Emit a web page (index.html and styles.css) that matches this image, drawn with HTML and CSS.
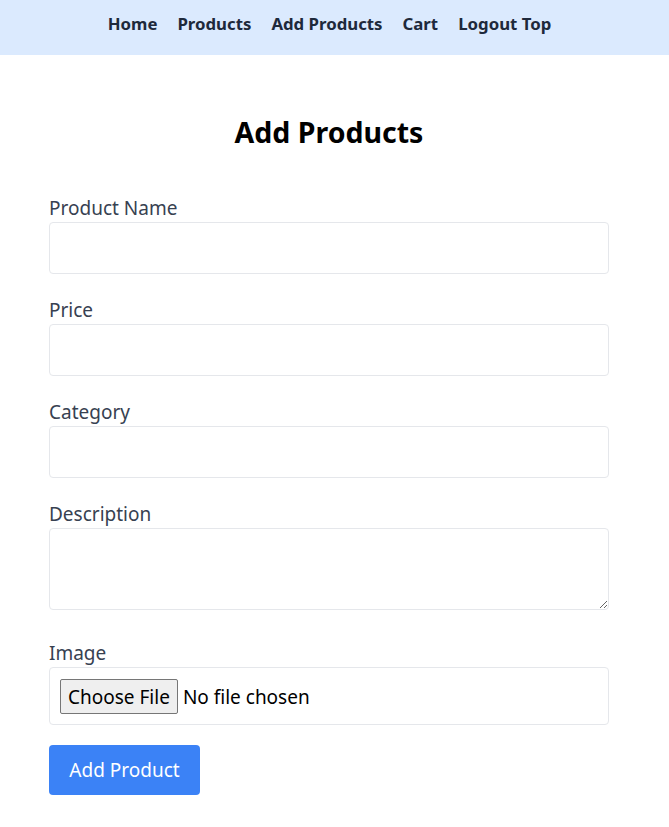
FILE: index.html
```html
<!DOCTYPE html>
<html lang="en">
<head>
<meta charset="utf-8">
<title>Add Products</title>
<link rel="stylesheet" href="styles.css">
</head>
<body>
<nav class="nav">
  <a class="nav-link" href="#">Home</a>
  <a class="nav-link" href="#">Products</a>
  <a class="nav-link" href="#">Add Products</a>
  <a class="nav-link" href="#">Cart</a>
  <a class="nav-link" href="#">Logout Top</a>
</nav>
<main class="main">
  <h2 class="title">Add Products</h2>
  <form class="form">
    <div class="group">
      <label class="label" for="name">Product Name</label>
      <input class="field" id="name" type="text">
    </div>
    <div class="group">
      <label class="label" for="price">Price</label>
      <input class="field" id="price" type="text">
    </div>
    <div class="group">
      <label class="label" for="cat">Category</label>
      <input class="field" id="cat" type="text">
    </div>
    <div class="group group-area">
      <label class="label" for="desc">Description</label>
      <textarea class="field area" id="desc"></textarea>
    </div>
    <div class="group">
      <label class="label" for="img">Image</label>
      <input class="field file" id="img" type="file">
    </div>
    <button class="submit" type="button">Add Product</button>
  </form>
</main>
</body>
</html>
```

FILE: styles.css
```css
* { box-sizing: border-box; }
body {
  margin: 0;
  font-family: "Noto Sans", "Open Sans", sans-serif;
  background: #fff;
}
.nav {
  height: 55px;
  background: #dbeafe;
  display: flex;
  justify-content: center;
  align-items: center;
  gap: 20px;
  padding-right: 10px;
  padding-bottom: 8px;
}
.nav-link {
  font-weight: 700;
  font-size: 16.8px;
  color: #1e293b;
  text-decoration: none;
}
.main {
  width: 560px;
  margin-left: 49px;
  padding-top: 57px;
}
.title {
  margin: 0 0 42px;
  text-align: center;
  font-size: 28.5px;
  font-weight: 700;
  color: #000;
  line-height: 40px;
}
.form {
  display: flex;
  flex-direction: column;
}
.group {
  display: flex;
  flex-direction: column;
  margin-bottom: 22px;
}
.group-area {
  margin-bottom: 29px;
}
.label {
  font-size: 19px;
  color: #374151;
  line-height: 28px;
}
.field {
  width: 560px;
  height: 52px;
  border: 1px solid #e5e7eb;
  border-radius: 4px;
  font-family: inherit;
  font-size: 19px;
  padding: 8px 12px;
}
.area {
  height: 82px;
  resize: vertical;
}
.file {
  height: 58px;
  padding: 11px 10px;
  color: #000;
  font-size: 19px;
}
.file::file-selector-button {
  font-family: inherit;
  font-size: 19px;
  height: 35px;
  padding: 0 7px;
  margin-right: 5px;
  border: 1px solid #767676;
  border-radius: 2px;
  background: #efefef;
  color: #000;
}
.submit {
  align-self: flex-start;
  margin-top: -2px;
  width: 151px;
  height: 50px;
  background: #3b82f6;
  color: #fff;
  border: none;
  border-radius: 4px;
  font-family: inherit;
  font-size: 19px;
}
```
